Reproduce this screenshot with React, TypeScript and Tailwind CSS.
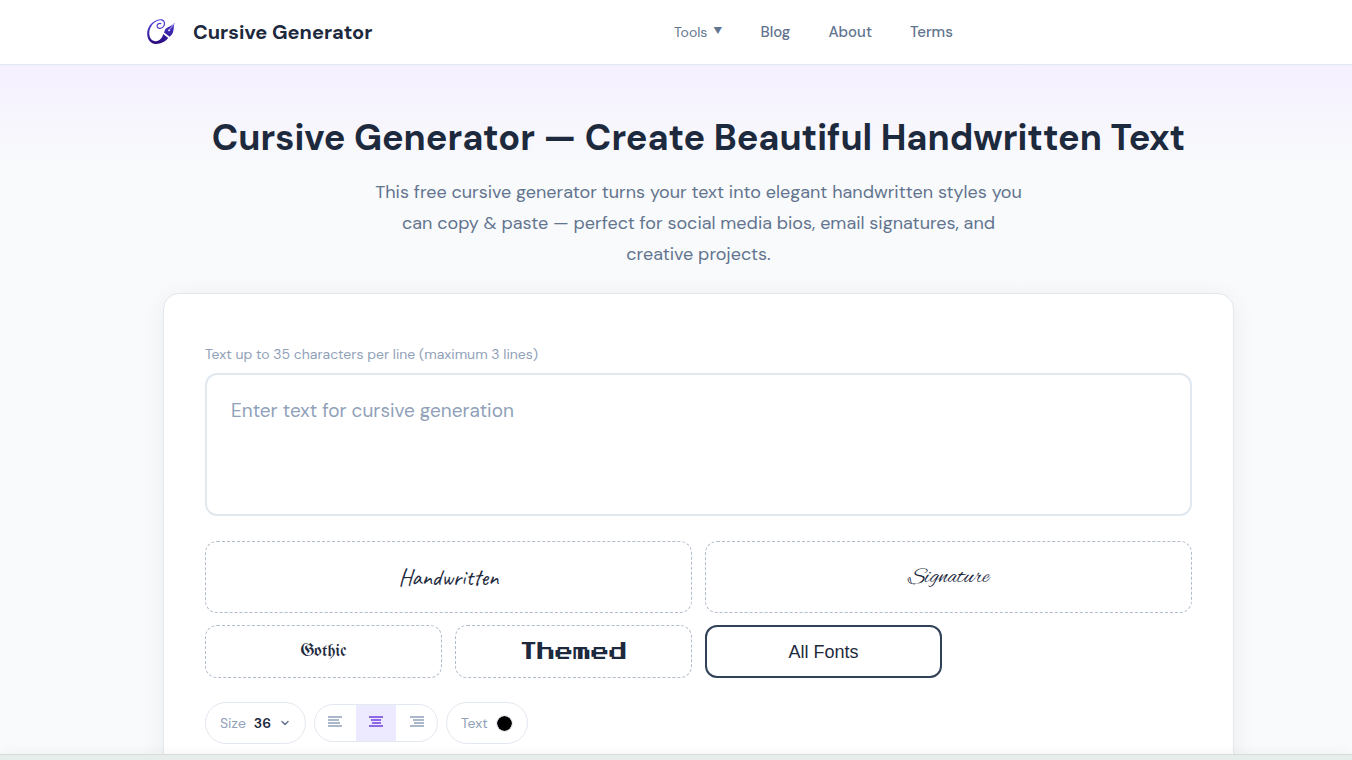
import { useState } from 'react';
import { ChevronDown } from 'lucide-react';
import clsx from 'clsx';

type Align = 'left' | 'center' | 'right';

const NAV_LINKS = ['Blog', 'About', 'Terms'];

const FONT_STYLES = [
  { id: 'handwritten', label: 'Handwritten', className: 'col-span-2 h-18 font-["Caveat","Lato",cursive] text-[23px]' },
  { id: 'signature', label: 'Signature', className: 'col-span-2 h-18 font-["Alex_Brush","Liberation_Serif",cursive] text-[23px]' },
  { id: 'gothic', label: 'Gothic', className: 'h-[53px] font-["UnifrakturMaguntia","Liberation_Serif",serif] text-[18px]' },
  { id: 'themed', label: 'Themed', className: 'h-[53px] font-["Press_Start_2P","Liberation_Mono",monospace] text-[18px]' },
  { id: 'all', label: 'All Fonts', className: 'h-[53px] font-["Liberation_Sans",sans-serif] text-[18px]' },
];

const ALIGN_LINES: Record<Align, string> = {
  left: 'M0 1H14M0 4H11M0 7H12M0 10H14',
  center: 'M0 1H14M2 4H12M3 7H12M0 10H14',
  right: 'M0 1H14M3 4H14M4 7H14M0 10H14',
};

function Logo() {
  return (
    <svg viewBox="0 0 32 32" className="size-8" fill="none" aria-hidden="true">
      <defs>
        <linearGradient id="ink" x1="0" y1="3" x2="0" y2="28" gradientUnits="userSpaceOnUse">
          <stop offset="0" stopColor="#4f46e5" />
          <stop offset="1" stopColor="#2a0a7a" />
        </linearGradient>
      </defs>
      {/* C stroke that curls into an open spiral */}
      <path
        d="M15.800 7.600C13.800 6.800 11.500 8.600 12.200 10.700 13 12.900 16.600 12.800 18.400 10.500 20.300 8 19.800 5 17 3.900"
        stroke="url(#ink)"
        strokeWidth="1.200"
        strokeLinecap="round"
      />
      {/* body of the C, thick at the bottom */}
      <path
        d="M17.400 3.600C15.800 3 13.800 3.200 12 4 6 6.200 2 12 2.200 18 2.400 24 6 28 11 27.900 15.800 27.800 20.500 25.500 23.200 22L18.300 18C17.200 22.200 14.500 25 11 25.200 7 25.400 4.400 22.500 4.300 17.600 4.200 12 7.500 6.900 12.300 5 14 4.300 15.600 4.200 17 4.600Z"
        fill="url(#ink)"
      />
      {/* nib */}
      <path d="M29.700 6.700C28.400 10 29.200 14.800 27.200 18L24.800 20.800 19 16.400 20.300 13C23 10.900 27 9.700 29.700 6.700Z" fill="url(#ink)" />
      <path d="M24 14.300 29 7.800M18.300 17 24.200 21.600" stroke="#fff" strokeWidth=".6" />
      <circle cx="24" cy="14.300" r=".9" fill="#fff" />
    </svg>
  );
}

function Header() {
  return (
    <header className="border-b border-slate-200 bg-white">
      <div className="mx-auto flex h-16 max-w-[1062px] items-center">
        <a href="#" className="flex w-[529px] items-center gap-4 text-[20px] font-bold text-slate-800">
          <Logo />
          Cursive Generator
        </a>
        <nav className="flex items-center gap-[38px] text-[15px] font-medium text-slate-500">
          <button type="button" className="flex items-center gap-1.5 text-[14px] font-normal">
            Tools <span className="text-[9px]">▼</span>
          </button>
          {NAV_LINKS.map((name) => (
            <a key={name} href="#">
              {name}
            </a>
          ))}
        </nav>
      </div>
    </header>
  );
}

function Toolbar() {
  const [size, setSize] = useState('36');
  const [align, setAlign] = useState<Align>('center');
  const [color, setColor] = useState('#000000');

  return (
    <div className="flex items-center gap-2 text-[14px] text-slate-400">
      <label className="relative flex h-[42px] w-[101px] items-center gap-2 rounded-full border border-slate-200 pl-[14px]">
        Size
        <select
          value={size}
          onChange={(e) => setSize(e.target.value)}
          className="w-10 appearance-none font-semibold text-slate-800 outline-none"
        >
          {['24', '36', '48', '60', '72'].map((s) => (
            <option key={s}>{s}</option>
          ))}
        </select>
        <ChevronDown size={12} strokeWidth={3} className="pointer-events-none absolute right-[14px] text-slate-500" />
      </label>

      <div className="flex h-[38px] w-31 overflow-hidden rounded-full border border-slate-200">
        {(Object.keys(ALIGN_LINES) as Align[]).map((a) => (
          <button
            key={a}
            type="button"
            aria-label={`Align ${a}`}
            onClick={() => setAlign(a)}
            className={clsx(
              'flex flex-1 items-center justify-center pb-1',
              a === align ? 'bg-violet-100 text-[#6d3fe0]' : 'text-slate-400'
            )}
          >
            <svg viewBox="0 0 14 11" className="h-[11px] w-[14px]" stroke="currentColor" strokeWidth="1.300">
              <path d={ALIGN_LINES[a]} />
            </svg>
          </button>
        ))}
      </div>

      <label className="flex h-[42px] items-center gap-2 rounded-full border border-slate-200 px-[14px]">
        Text
        <input
          type="color"
          value={color}
          onChange={(e) => setColor(e.target.value)}
          className="size-[17px] appearance-none overflow-hidden rounded-full border border-slate-200 [&::-webkit-color-swatch]:rounded-full [&::-webkit-color-swatch]:border-0 [&::-webkit-color-swatch-wrapper]:p-0"
        />
      </label>
    </div>
  );
}

export default function App() {
  const [text, setText] = useState('');
  const [active, setActive] = useState('all');

  return (
    <div className='min-h-screen bg-slate-50 font-["DM_Sans","Inter",sans-serif]'>
      <Header />

      <main className="bg-linear-to-b from-[#f5f0ff] to-slate-50 to-[100px] pl-[45px]">
        <div className="mx-auto max-w-[1071px] pt-[43px]">
          <section className="text-center">
            <h1 className="text-[36px] leading-[60px] font-bold whitespace-nowrap text-slate-800">
              Cursive Generator — Create Beautiful Handwritten Text
            </h1>
            <p className="mx-auto mt-[9px] max-w-[660px] text-[18px] leading-[31px] text-slate-500">
              This free cursive generator turns your text into elegant handwritten styles you can copy &amp; paste —
              perfect for social media bios, email signatures, and creative projects.
            </p>
          </section>

          <section className="mt-[23px] rounded-t-[16px] border border-slate-200 bg-white px-[41px] pt-[50px] pb-10 shadow-[0_4px_24px_rgba(0,0,0,0.06)]">
            <label htmlFor="source" className="block text-[14px] leading-5 text-slate-400">
              Text up to 35 characters per line (maximum 3 lines)
            </label>
            <textarea
              id="source"
              value={text}
              onChange={(e) => setText(e.target.value)}
              placeholder="Enter text for cursive generation"
              className="mt-[9px] block h-[143px] w-full resize-none rounded-xl border-2 border-slate-200 px-6 py-5 text-[19px] leading-8 text-slate-800 outline-none placeholder:text-slate-400"
            />

            <div className="mt-[25px] grid grid-cols-4 gap-x-[13px] gap-y-3">
              {FONT_STYLES.map((f) => (
                <button
                  key={f.id}
                  type="button"
                  onClick={() => setActive(f.id)}
                  className={clsx(
                    'rounded-xl leading-none text-slate-800',
                    active === f.id ? 'border-2 border-slate-700' : 'border border-dashed border-[#b0bccb]',
                    f.className
                  )}
                >
                  {f.label}
                </button>
              ))}
            </div>

            <div className="mt-6">
              <Toolbar />
            </div>
          </section>
        </div>
      </main>

      {/* bottom anchor strip */}
      <div className="fixed inset-x-0 bottom-0 h-1.5 border-t border-[#d5dcd9] bg-[#e7edea] shadow-[0_-2px_12px_rgba(0,0,0,0.05)]" />
    </div>
  );
}
